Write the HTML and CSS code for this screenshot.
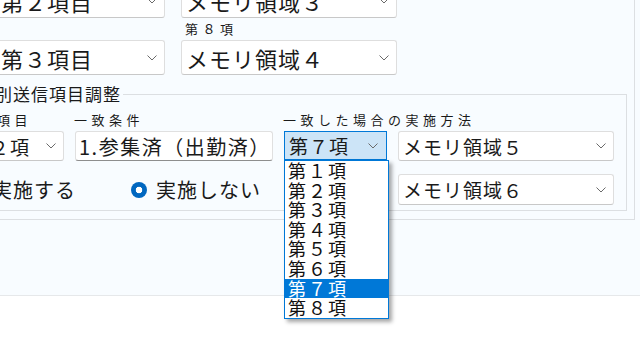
FILE: index.html
```html
<!DOCTYPE html>
<html lang="ja">
<head>
  <meta charset="UTF-8">
  <title>個別送信項目調整</title>
  <link rel="stylesheet" href="styles.css">
</head>
<body>
  <div class="panel">
    <div class="frame">
      <div class="top-grid">
        <div class="combo big"><span>第２項目</span><svg class="chev" width="10" height="6" viewBox="0 0 10 6"><polyline points="0.5,0.5 5,5 9.5,0.5"/></svg></div>
        <div class="combo big"><span>メモリ領域３</span><svg class="chev" width="10" height="6" viewBox="0 0 10 6"><polyline points="0.5,0.5 5,5 9.5,0.5"/></svg></div>
        <div class="cap"></div>
        <div class="cap">第８項</div>
        <div class="combo big"><span>第３項目</span><svg class="chev" width="10" height="6" viewBox="0 0 10 6"><polyline points="0.5,0.5 5,5 9.5,0.5"/></svg></div>
        <div class="combo big"><span>メモリ領域４</span><svg class="chev" width="10" height="6" viewBox="0 0 10 6"><polyline points="0.5,0.5 5,5 9.5,0.5"/></svg></div>
      </div>

      <fieldset class="group">
        <legend>個別送信項目調整</legend>
        <div class="group-grid">
          <div class="cap">比較項目</div>
          <div class="cap">一致条件</div>
          <div class="cap wide">一致した場合の実施方法</div>

          <div class="combo"><span>第２項</span><svg class="chev" width="10" height="6" viewBox="0 0 10 6"><polyline points="0.5,0.5 5,5 9.5,0.5"/></svg></div>
          <div class="textbox">1.参集済（出勤済）</div>
          <div class="dropdown">
            <div class="combo focused"><span>第７項</span><svg class="chev" width="10" height="6" viewBox="0 0 10 6"><polyline points="0.5,0.5 5,5 9.5,0.5"/></svg></div>
            <ul class="droplist">
              <li>第１項</li>
              <li>第２項</li>
              <li>第３項</li>
              <li>第４項</li>
              <li>第５項</li>
              <li>第６項</li>
              <li class="selected">第７項</li>
              <li>第８項</li>
            </ul>
          </div>
          <div class="combo"><span>メモリ領域５</span><svg class="chev" width="10" height="6" viewBox="0 0 10 6"><polyline points="0.5,0.5 5,5 9.5,0.5"/></svg></div>

          <div class="radios second-row">
            <label class="radio"><span class="dot"></span>実施する</label>
            <label class="radio"><span class="dot on"></span>実施しない</label>
          </div>
          <div class="second-row"></div>
          <div class="combo second-row"><span>メモリ領域６</span><svg class="chev" width="10" height="6" viewBox="0 0 10 6"><polyline points="0.5,0.5 5,5 9.5,0.5"/></svg></div>
        </div>
      </fieldset>
    </div>
  </div>
</body>
</html>
```

FILE: styles.css
```css
:root {
  --panel-bg: #f8fcff;
  --line: #dcdfe2;
  --text: #1a1a1a;
  --accent: #0078d7;
  --radio: #0067c0;
}
html, body {
  margin: 0;
  padding: 0;
}
body {
  width: 640px;
  height: 360px;
  overflow: hidden;
  background: #fff;
  color: var(--text);
  font-family: "Noto Sans CJK JP", "Noto Sans", sans-serif;
}
.panel {
  display: flow-root;
  height: 295px;
  background: var(--panel-bg);
  border-bottom: 1px solid #e6e8ea;
}
.frame {
  box-sizing: border-box;
  width: 685px;
  margin: -17px 0 0 -50px;
  border-right: 1px solid var(--line);
  border-bottom: 1px solid var(--line);
}
.top-grid {
  display: grid;
  grid-template-columns: 169px 216px;
  grid-template-rows: 35px auto 35px;
  column-gap: 16px;
  margin-left: 46px;
}
.cap {
  font-size: 13px;
  line-height: 16px;
  letter-spacing: 4.5px;
  white-space: nowrap;
}
.top-grid .cap {
  margin: 3px 0;
  padding-left: 4px;
}
.combo {
  box-sizing: border-box;
  display: flex;
  align-items: center;
  justify-content: space-between;
  padding: 0 7px 0 4px;
  background: #fff;
  border: 1px solid #dedede;
  border-bottom-color: #c8c8c8;
  border-radius: 3px;
  font-size: 19px;
  letter-spacing: 1px;
  white-space: nowrap;
  overflow: hidden;
}
.combo.big {
  font-size: 22px;
}
.chev {
  flex: none;
  fill: none;
  stroke: #6a6a6a;
  stroke-width: 1;
}
.group {
  margin: 9px 7px 8px 0;
  padding: 8px 12px 5px 14px;
  border: 1px solid var(--line);
  min-width: 0;
}
.group legend {
  margin-left: 10px;
  padding: 0 2px;
  font-size: 17px;
  line-height: 20px;
  letter-spacing: 1px;
}
.group-grid {
  display: grid;
  grid-template-columns: 99px 198px 103px 216px;
  grid-template-rows: auto auto auto;
  column-gap: 11px;
  row-gap: 0;
}
.group-grid .cap {
  margin-bottom: 3px;
  margin-left: -1px;
}
.group-grid .cap:first-child {
  margin-left: -3px;
}
.cap.wide {
  grid-column: span 2;
}
.group-grid .combo,
.group-grid .textbox {
  height: 30px;
}
.second-row {
  margin-top: 13px;
}
.group-grid .combo.second-row {
  height: 31px;
}
.textbox {
  box-sizing: border-box;
  display: flex;
  align-items: center;
  padding: 0 3px;
  background: #fff;
  border: 1px solid #e0e0e0;
  border-bottom: 1px solid #8e8e8e;
  border-radius: 3px;
  font-size: 20px;
  letter-spacing: 1.5px;
  white-space: nowrap;
}
.dropdown {
  position: relative;
}
.combo.focused {
  height: 29px;
  background: #cce4f7;
  border: 1px solid var(--accent);
  border-radius: 0;
  padding-left: 4px;
  padding-right: 8px;
}
.droplist {
  position: absolute;
  top: 29px;
  left: 0;
  z-index: 2;
  box-sizing: border-box;
  width: 105px;
  margin: 0;
  padding: 0;
  list-style: none;
  background: #fff;
  border: 1px solid var(--accent);
  box-shadow: 3px 3px 4px rgba(0, 0, 0, 0.35);
}
.droplist li {
  height: 19.6px;
  line-height: 19.6px;
  padding-left: 3px;
  font-size: 18px;
  letter-spacing: 2px;
  color: #111;
  white-space: nowrap;
}
.droplist li.selected {
  background: var(--accent);
  color: #fff;
}
.radios {
  grid-column: span 2;
  display: flex;
  align-items: center;
  gap: 55px;
  padding-left: 2px;
}
.radio {
  display: flex;
  align-items: center;
  gap: 9px;
  font-size: 20px;
  letter-spacing: 1px;
  white-space: nowrap;
}
.dot {
  box-sizing: border-box;
  width: 16px;
  height: 16px;
  border-radius: 50%;
  border: 1px solid #777;
  background: #fff;
}
.dot.on {
  border: none;
  background: radial-gradient(circle, #fff 0 3px, var(--radio) 3.6px);
}
```
